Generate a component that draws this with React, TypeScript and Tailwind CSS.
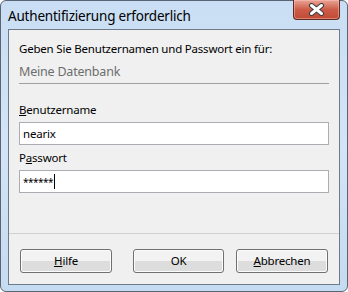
import React from "react";

const font = { fontFamily: '"Noto Sans", "Open Sans", sans-serif' };

const buttonClassName =
  "flex h-[24px] items-center justify-center rounded-[3px] border border-[#707070] bg-gradient-to-b from-[#f2f2f2] from-50% to-[#dddddd] to-50% text-[11.5px] tracking-[-0.2px] text-black shadow-[inset_0_0_0_1px_#fcfcfc]";

const CloseIcon = () => (
  <svg width="17" height="13" viewBox="0 0 17 13">
    <path d="M3.5 2.5 L13.5 10.5 M13.5 2.5 L3.5 10.5" stroke="#3c3c3c" strokeWidth="5" strokeLinecap="round" />
    <path d="M3.5 2.5 L13.5 10.5 M13.5 2.5 L3.5 10.5" stroke="#ffffff" strokeWidth="3" strokeLinecap="round" />
  </svg>
);

const App = () => {
  return (
    <div className="h-[292px] w-[348px] bg-white" style={font}>
      <div className="flex h-full w-full flex-col rounded-[6px] border border-[#5b6572] bg-gradient-to-b from-[#c9def4] via-[#d3e4f6] to-[#c5dbf1] px-[7px] pb-[6px]">
        {/* TITLE BAR */}
        <div className="flex h-[28px] shrink-0 items-start">
          <span className="mt-[6px] text-[13.5px] leading-[18px] tracking-[-0.2px] text-black">
            Authentifizierung erforderlich
          </span>
          <div className="-mt-px ml-auto flex h-[20px] w-[47px] items-center justify-center rounded-b-[4px] border border-t-0 border-[#5a2c24] bg-gradient-to-b from-[#e9a497] via-[#cc5c48] to-[#c04a34] shadow-[inset_0_0_0_1px_rgba(255,200,190,0.45)]">
            <CloseIcon />
          </div>
        </div>

        {/* CLIENT AREA */}
        <div className="flex flex-1 flex-col border border-[#6c7a89] bg-[#f0f0f0]">
          <div className="flex flex-col px-[10px] pt-[11px] text-[11.5px] tracking-[-0.2px]">
            <p className="leading-[16px] text-black">
              Geben Sie Benutzernamen und Passwort ein für:
            </p>
            <p className="mt-[6px] text-[12.5px] leading-[17px] text-[#6d6d6d]">Meine Datenbank</p>
            <div className="mt-[3px] h-px w-[310px] bg-[#a0a0a0]" />

            <label className="mt-[18px] leading-[16px] text-black">
              <span className="underline">B</span>enutzername
            </label>
            <div className="mt-[4px] flex h-[23px] w-[310px] items-center border border-[#abadb3] bg-white px-[3px] text-black">
              nearix
            </div>

            <label className="mt-[5px] leading-[16px] text-black">
              P<span className="underline">a</span>sswort
            </label>
            <div className="mt-[4px] flex h-[23px] w-[310px] items-center border border-[#abadb3] bg-white px-[3px] text-black">
              <span className="text-[10px] leading-none tracking-[-0.5px]">******</span>
              <span className="ml-px h-[15px] w-px bg-black" />
            </div>
          </div>

          {/* FOOTER */}
          <div className="mt-auto flex h-[51px] items-start border-t border-[#d0d0d0] pl-[11px] pt-[15px]">
            <button className={`${buttonClassName} w-[92px]`}>
              <span className="underline">H</span>ilfe
            </button>
            <button className={`${buttonClassName} ml-[21px] w-[91px] border-[#3c7fb1] shadow-[inset_0_0_0_1px_#48d0f6]`}>
              OK
            </button>
            <button className={`${buttonClassName} ml-[12px] w-[92px]`}>
              <span className="underline">A</span>bbrechen
            </button>
          </div>
        </div>
      </div>
    </div>
  );
};

export default App;
